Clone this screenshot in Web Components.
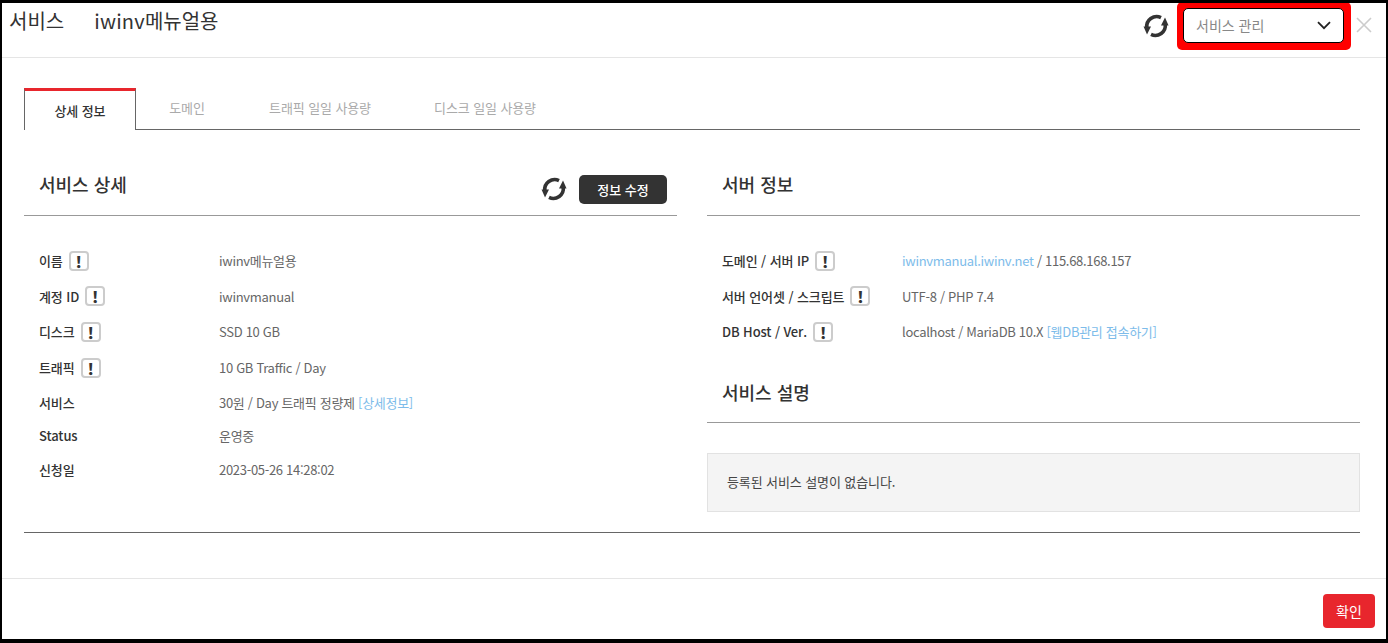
<!DOCTYPE html>
<html lang="ko">
<head>
<meta charset="utf-8">
<title>서비스 관리</title>
<style>
html,body{margin:0;height:100%;overflow:hidden;background:#000;}
body{font-family:"Noto Sans CJK KR",sans-serif;}
</style>
</head>
<body>
<service-modal></service-modal>
<script>
const FONT = '"Noto Sans CJK KR","Noto Sans",sans-serif';
const REFRESH = `<svg viewBox="0 0 24 24" width="100%" height="100%" fill="none" stroke="#333" stroke-width="3.6">
  <path d="M17 3.6A10 10 0 0 0 2.8 14"/>
  <path d="M7 20.4A10 10 0 0 0 21.2 10"/>
  <path d="M-.5 12.5H7L3 20.5Z" fill="#333" stroke="none"/>
  <path d="M24.500 11.500H17L21 3.500Z" fill="#333" stroke="none"/>
</svg>`;

class RefreshIcon extends HTMLElement {
    constructor (){
        super();
        this.attachShadow({mode:'open'}).innerHTML = `
            <style>:host{display:block;width:24px;height:24px;}svg{overflow:visible;}</style>${REFRESH}`;
    }
}
customElements.define('refresh-icon',RefreshIcon);

// the little "!" help box next to labels
class HelpMark extends HTMLElement {
    constructor (){
        super();
        this.attachShadow({mode:'open'}).innerHTML = `
            <style>
                :host{display:inline-flex;align-items:center;justify-content:center;box-sizing:border-box;
                    width:20px;height:20px;margin-left:6px;border:2px solid #ccc;border-radius:4px;
                    font:900 16px/1 ${FONT};color:#333;}
            </style>!`;
    }
}
customElements.define('help-mark',HelpMark);

class ModalHeader extends HTMLElement {
    constructor (){
        super();
        this.attachShadow({mode:'open'}).innerHTML = `
            <style>
                :host{display:flex;align-items:flex-start;box-sizing:border-box;height:55px;
                    border-bottom:1px solid #e5e5e5;padding-left:7px;color:#333;}
                .title{font-size:20px;line-height:28px;margin-top:4px;}
                .title span{margin-left:30px;}
                .title b{font-weight:400;letter-spacing:.2px;}
                .right{margin-left:auto;display:flex;align-items:flex-start;}
                refresh-icon{margin:11px 9px 0 0;}
                .outline{box-sizing:border-box;width:174px;height:48px;background:#f00;border-radius:5px;margin-top:-1px;
                    padding:6px 7px 7px 6px;}
                .select{box-sizing:border-box;height:100%;background:#fff;border:1px solid #000;border-radius:5px;display:flex;align-items:center;
                    justify-content:space-between;padding:0 12px 1px 12px;font-size:14px;color:#888;}
                .close{width:16px;height:16px;margin:14px 14px 0 5px;}
            </style>
            <div class="title">서비스<span><b>iwinv</b>메뉴얼용</span></div>
            <div class="right">
                <refresh-icon></refresh-icon>
                <div class="outline"><div class="select">서비스 관리
                    <svg width="14" height="9" viewBox="0 0 14 9" fill="none" stroke="#222" stroke-width="1.8"><path d="M1 1.2 7 7.2 13 1.2"/></svg>
                </div></div>
                <svg class="close" viewBox="0 0 16 16" stroke="#ccc" stroke-width="1.6"><path d="M1 1 15 15M15 1 1 15"/></svg>
            </div>`;
    }
}
customElements.define('modal-header',ModalHeader);

class TabBar extends HTMLElement {
    constructor (){
        super();
        this.attachShadow({mode:'open'}).innerHTML = `
            <style>
                :host{display:flex;height:42px;box-sizing:border-box;border-bottom:1px solid #666;font-size:13px;color:#aaa;letter-spacing:-.1px;}
                div{display:flex;align-items:center;justify-content:center;padding-bottom:2px;}
                .on{box-sizing:border-box;width:112px;height:42px;border:1px solid #666;border-top:3px solid #e8262d;
                    border-bottom:0;background:#fff;color:#333;font-weight:500;padding-bottom:1px;padding-top:1px;}
                .t2{width:102px;}
                .t3{width:164px;}
                .t4{width:166px;}
            </style>
            <div class="on">상세 정보</div>
            <div class="t2">도메인</div>
            <div class="t3">트래픽 일일 사용량</div>
            <div class="t4">디스크 일일 사용량</div>`;
    }
}
customElements.define('tab-bar',TabBar);

class SectionHead extends HTMLElement {
    constructor (){
        super();
        this.attachShadow({mode:'open'}).innerHTML = `
            <style>
                :host{display:flex;align-items:center;box-sizing:border-box;height:58px;padding:0 10px 0 15px;
                    border-bottom:1px solid #999;font-size:18px;font-weight:500;color:#333;}
                .title{line-height:26px;margin-top:var(--title-shift,-6px);}
                .tools{margin-left:auto;display:flex;align-items:center;gap:13px;margin-top:5px;}
            </style>
            <div class="title"><slot></slot></div>
            <div class="tools"><slot name="tools"></slot></div>`;
    }
}
customElements.define('section-head',SectionHead);

class InfoList extends HTMLElement {
    constructor (){
        super();
        this.attachShadow({mode:'open'}).innerHTML = `
            <style>
                :host{display:block;padding:27px 0 0 15px;}
            </style>
            <slot></slot>`;
    }
}
customElements.define('info-list',InfoList);

class InfoRow extends HTMLElement {
    constructor (){
        super();
        this.attachShadow({mode:'open'}).innerHTML = `
            <style>
                :host{display:flex;align-items:center;font-size:13px;color:#666;height:35.6px;letter-spacing:-.3px;}
                :host([plain]){height:33.6px;}
                .k{width:180px;flex:none;display:flex;align-items:center;color:#333;font-weight:500;letter-spacing:-.1px;}
            </style>
            <div class="k"><slot name="k"></slot></div>
            <div><slot></slot></div>`;
    }
}
customElements.define('info-row',InfoRow);

class ServiceModal extends HTMLElement {
    constructor (){
        super();
        this.attachShadow({mode:'open'}).innerHTML = `
            <style>
                :host{display:flex;flex-direction:column;box-sizing:border-box;height:636px;margin:3px 2px 0;
                    background:#fff;font-family:${FONT};overflow:hidden;}
                main{flex:1;padding:30px 26px 0 22px;}
                .cols{display:grid;grid-template-columns:653px 653px;column-gap:30px;border-bottom:1px solid #666;height:403px;box-sizing:border-box;}
                section-head.top{margin-top:28px;}
                section-head.next{margin-top:15px;--title-shift:-2px;}
                a{color:#7dbcea;text-decoration:none;}
                .edit{display:flex;align-items:center;justify-content:center;width:88px;height:29px;background:#333;color:#fff;
                    border-radius:5px;font-size:13px;font-weight:500;}
                .desc{box-sizing:border-box;height:59px;margin-top:30px;padding:0 0 2px 19px;display:flex;align-items:center;
                    background:#f4f4f4;border:1px solid #e2e2e2;font-size:13px;color:#444;letter-spacing:-.1px;}
                footer{box-sizing:border-box;height:61px;border-top:1px solid #e5e5e5;display:flex;justify-content:flex-end;
                    align-items:flex-start;padding:15px 11px 0 0;}
                .ok{display:flex;align-items:center;justify-content:center;width:52px;height:34px;background:#e8262d;color:#fff;
                    border-radius:4px;font-size:14px;}
            </style>
            <modal-header></modal-header>
            <main>
                <tab-bar></tab-bar>
                <div class="cols">
                    <section>
                        <section-head class="top">서비스 상세
                            <refresh-icon slot="tools"></refresh-icon>
                            <div class="edit" slot="tools">정보 수정</div>
                        </section-head>
                        <info-list>
                            <info-row><span slot="k">이름</span><help-mark slot="k"></help-mark>iwinv메뉴얼용</info-row>
                            <info-row><span slot="k">계정 ID</span><help-mark slot="k"></help-mark>iwinvmanual</info-row>
                            <info-row><span slot="k">디스크</span><help-mark slot="k"></help-mark>SSD 10 GB</info-row>
                            <info-row><span slot="k">트래픽</span><help-mark slot="k"></help-mark>10 GB Traffic / Day</info-row>
                            <info-row plain><span slot="k">서비스</span>30원 / Day 트래픽 정량제 <a>[상세정보]</a></info-row>
                            <info-row plain><span slot="k">Status</span>운영중</info-row>
                            <info-row plain><span slot="k">신청일</span>2023-05-26 14:28:02</info-row>
                        </info-list>
                    </section>
                    <section>
                        <section-head class="top">서버 정보</section-head>
                        <info-list>
                            <info-row><span slot="k">도메인 / 서버 IP</span><help-mark slot="k"></help-mark><a>iwinvmanual.iwinv.net</a> / 115.68.168.157</info-row>
                            <info-row><span slot="k">서버 언어셋 / 스크립트</span><help-mark slot="k"></help-mark>UTF-8 / PHP 7.4</info-row>
                            <info-row><span slot="k">DB Host / Ver.</span><help-mark slot="k"></help-mark>localhost / MariaDB 10.X <a>[웹DB관리 접속하기]</a></info-row>
                        </info-list>
                        <section-head class="next">서비스 설명</section-head>
                        <div class="desc">등록된 서비스 설명이 없습니다.</div>
                    </section>
                </div>
            </main>
            <footer><div class="ok">확인</div></footer>`;
    }
}
customElements.define('service-modal',ServiceModal);
</script>
</body>
</html>
